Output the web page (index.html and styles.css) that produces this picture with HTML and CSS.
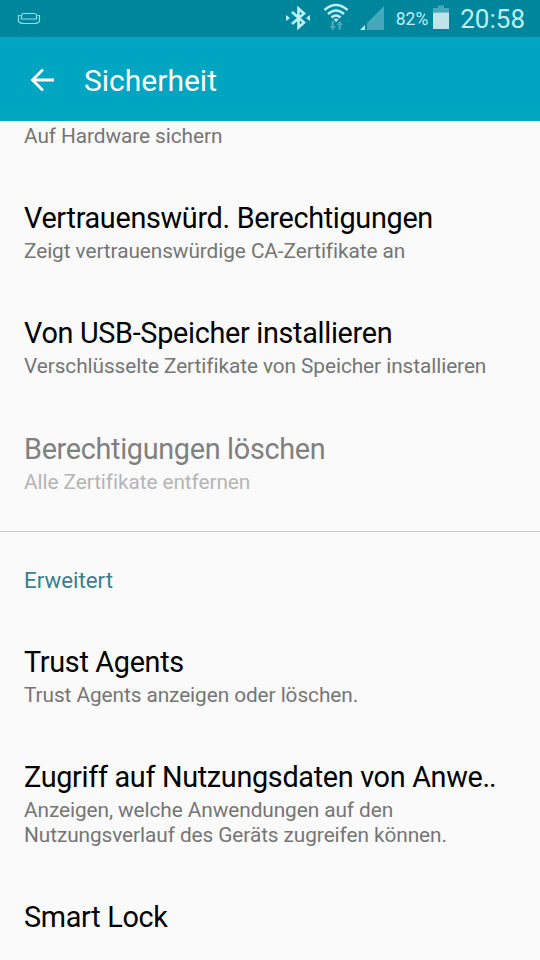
FILE: index.html
```html
<!DOCTYPE html>
<html lang="de">

<head>
    <meta charset="UTF-8">
    <title>Sicherheit</title>
    <link rel="stylesheet" href="styles.css">
</head>

<body>
    <header class="status-bar">
        <svg class="icon-notification" width="24" height="14" viewBox="0 0 24 14">
            <path d="M4.500 7 V3 Q5 1.500 6.500 1.500 H17.500 Q19 1.500 19.500 3 V7 Z M3.500 3.500 H1.500 V9 Q2.500 11.500 7 11.500 H17 Q21.500 11.500 22.500 9 V3.500 H20.500" />
        </svg>
        <div class="status-icons">
            <svg class="icon-bluetooth" width="26" height="24" viewBox="0 0 26 24">
                <path class="line" d="M7 6 L19 16.500 L13.500 21.500 V2.500 L19 7.500 L7 18" />
                <path class="solid" d="M1 9 L5 12 L1 15 Z M25 9 L21 12 L25 15 Z" />
            </svg>
            <svg class="icon-wifi" width="26" height="28" viewBox="0 0 26 28">
                <path class="line" d="M1.500 7 Q13 -3 24.500 7 M5 11 Q13 4 21 11 M8.500 14.500 Q13 10.500 17.500 14.500" />
                <path class="solid" d="M10.500 16.500 Q13 14.500 15.500 16.500 L13 19 Z" />
                <path class="traffic" d="M8.500 18 H11 V23 H13 L9.750 27.500 L6.500 23 H8.500 Z M15.500 26.500 H18 V22 H20 L16.750 17.500 L13.500 22 H15.500 Z" />
            </svg>
            <svg class="icon-signal" width="25" height="25" viewBox="0 0 25 25">
                <path class="dim" d="M24 0 V24 H7 V17 Z" />
                <path class="solid" d="M0 24 L5 19 V24 Z" />
            </svg>
            <span class="battery-level">82%</span>
            <svg class="icon-battery" width="18" height="25" viewBox="0 0 18 25">
                <path class="dim" d="M6 0.500 H12 V3 H17 V7.500 H1 V3 H6 Z" />
                <path class="charge" d="M1 7.500 H17 V24 H1 Z" />
            </svg>
            <span class="clock">20:58</span>
        </div>
    </header>

    <nav class="action-bar">
        <svg class="icon-back" width="26" height="26" viewBox="0 0 26 26">
            <path d="M25 13 H3.500 M14 2.500 L3.500 13 L14 23.500" />
        </svg>
        <h1>Sicherheit</h1>
    </nav>

    <main class="settings">
        <div class="item item-cut">
            <p>Auf Hardware sichern</p>
        </div>
        <div class="item">
            <h2>Vertrauenswürd. Berechtigungen</h2>
            <p>Zeigt vertrauenswürdige CA-Zertifikate an</p>
        </div>
        <div class="item">
            <h2>Von USB-Speicher installieren</h2>
            <p>Verschlüsselte Zertifikate von Speicher installieren</p>
        </div>
        <div class="item disabled">
            <h2>Berechtigungen löschen</h2>
            <p>Alle Zertifikate entfernen</p>
        </div>
        <h3 class="section-title">Erweitert</h3>
        <div class="item">
            <h2>Trust Agents</h2>
            <p>Trust Agents anzeigen oder löschen.</p>
        </div>
        <div class="item">
            <h2>Zugriff auf Nutzungsdaten von Anwe<span class="cut-dots">..</span></h2>
            <p>Anzeigen, welche Anwendungen auf den<br>Nutzungsverlauf des Geräts zugreifen können.</p>
        </div>
        <div class="item">
            <h2>Smart Lock</h2>
        </div>
    </main>
</body>

</html>
```

FILE: styles.css
```css
* {
    box-sizing: border-box;
}

body {
    margin: 0;
    height: 960px;
    display: flex;
    flex-direction: column;
    overflow: hidden;
    background: #fafafa;
    font-family: Roboto, "Noto Sans", sans-serif;
}

h1, h2, h3, p {
    margin: 0;
    font-weight: 400;
    white-space: nowrap;
}

svg {
    display: block;
    flex: none;
}

/* status bar */
.status-bar {
    flex: none;
    height: 37px;
    padding: 0 15px 0 17px;
    display: flex;
    justify-content: space-between;
    background: #00869c;
    color: #b9f1f7;
}

.icon-notification {
    margin-top: 12px;
    fill: none;
    stroke: #8fdde8;
    stroke-width: 1.2;
}

.status-icons {
    display: flex;
    align-items: flex-start;
}

.line {
    fill: none;
    stroke: #b9f1f7;
    stroke-width: 2.6;
}

.solid {
    fill: #b9f1f7;
}

.dim {
    fill: #46a9b9;
}

.traffic {
    fill: #46a9b9;
}

.charge {
    fill: #bfe5ea;
}

.icon-bluetooth {
    margin: 6px 12px 0 0;
}

.icon-wifi {
    margin: 3px 11px 0 0;
}

.icon-signal {
    margin: 6px 11px 0 0;
}

.battery-level {
    margin-top: 8px;
    font-size: 17.5px;
    line-height: 22px;
}

.icon-battery {
    margin: 5px 10px 0 4px;
}

.clock {
    font-size: 26px;
    line-height: 38px;
}

/* action bar */
.action-bar {
    flex: none;
    height: 84px;
    padding: 1px 0 0 29px;
    display: flex;
    align-items: center;
    gap: 29px;
    background: #00a5c2;
    color: #fff;
}

.icon-back {
    fill: none;
    stroke: #fff;
    stroke-width: 2.8;
}

.action-bar h1 {
    padding-top: 2px;
    font-size: 30px;
    line-height: 36px;
}

/* settings list */
.settings {
    flex: 1;
    min-height: 0;
    overflow: hidden;
}

.item {
    padding: 26px 24px 27px;
}

.item-cut {
    padding-top: 3px;
    padding-bottom: 26px;
}

.item h2 {
    font-size: 28.8px;
    line-height: 34px;
    letter-spacing: -0.31px;
    color: #000;
}

.item .cut-dots {
    letter-spacing: -1px;
}

.item p {
    padding-top: 4px;
    font-size: 20.8px;
    line-height: 24.5px;
    letter-spacing: -0.07px;
    color: #757575;
}

.item-cut p {
    padding-top: 0;
}

.disabled h2 {
    color: #808080;
}

.disabled p {
    color: #b5b5b5;
}

.section-title {
    margin-top: 10px;
    padding: 35px 24px 25.5px;
    border-top: 1px solid #c8c8c8;
    font-size: 22.3px;
    line-height: 26px;
    color: #37808d;
}
```
